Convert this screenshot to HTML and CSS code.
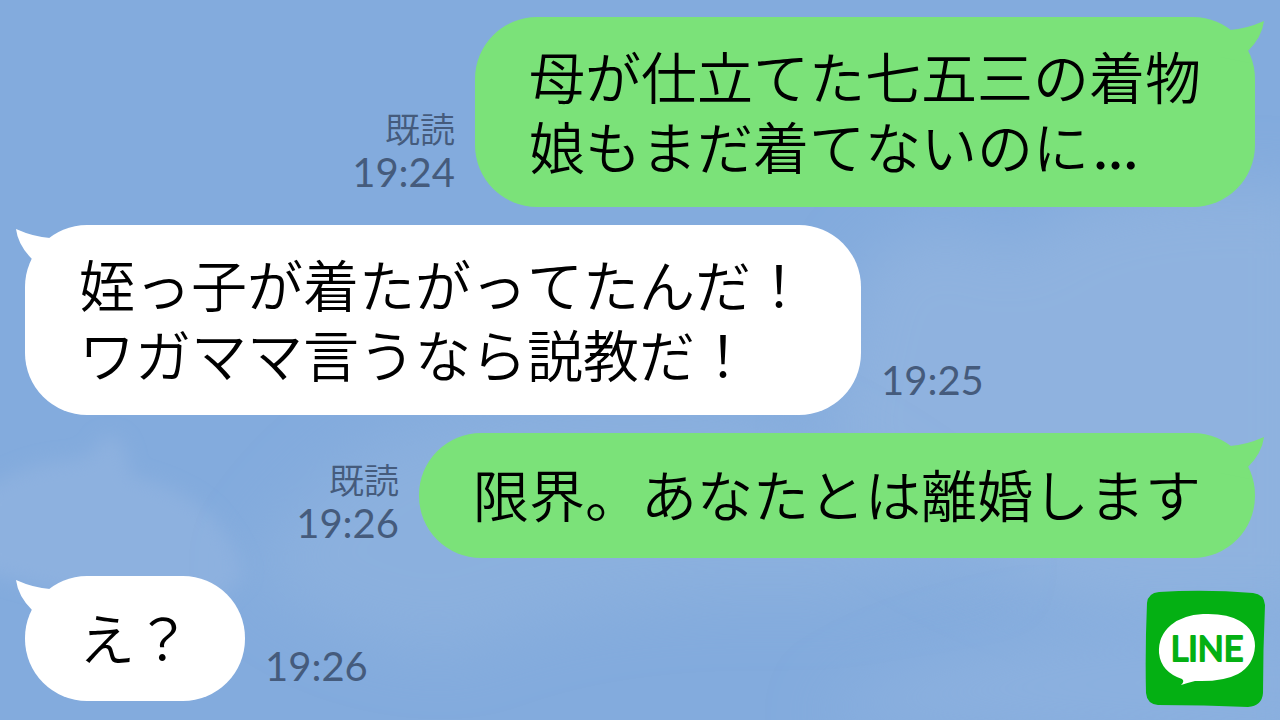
FILE: index.html
```html
<!DOCTYPE html>
<html lang="ja">
<head>
<meta charset="utf-8">
<meta name="viewport" content="width=device-width, initial-scale=1">
<title>LINE</title>
<link rel="stylesheet" href="styles.css">
</head>
<body>
<svg class="sky" viewBox="0 0 1280 720" preserveAspectRatio="xMidYMid slice" aria-hidden="true">
  <defs>
    <filter id="soft" x="-20%" y="-20%" width="140%" height="140%"><feGaussianBlur stdDeviation="9"/></filter>
    <filter id="wide" x="-30%" y="-30%" width="160%" height="160%"><feGaussianBlur stdDeviation="30"/></filter>
  </defs>
  <rect width="1280" height="720" fill="#83abdd"/>
  <path filter="url(#wide)" fill="#8fb2df" d="M860 270 Q930 190 1010 250 Q1100 170 1320 190 V620 H1120 Q900 560 820 450Z"/>
  <path filter="url(#soft)" fill="#8db1df" d="M-20 492 Q30 460 75 460 Q95 455 100 440 Q125 425 130 475 Q190 490 215 520 Q240 550 245 575 L200 620 Q80 600 -20 570Z"/>
  <path filter="url(#wide)" fill="#8bb0de" d="M250 570 Q320 460 400 430 Q560 390 760 410 Q900 470 1000 570 L820 600 Q600 590 460 650 Q340 650 250 570Z"/>
  <path filter="url(#wide)" fill="#8bb0df" d="M820 720 Q930 620 1320 610 V760Z"/>
</svg>

<main class="chat">
  <article class="message sent">
    <p class="bubble">母が仕立てた七五三の着物<br>娘もまだ着てないのに<span class="dots">...</span>
      <svg class="tail" viewBox="0 0 60 50" aria-hidden="true"><path d="M10 22 L20 13 Q36 12 54 4 Q52 20 38 34 L40 46 L10 40Z"/></svg>
    </p>
    <div class="meta"><span class="read">既読</span><time>19:24</time></div>
  </article>

  <article class="message received">
    <p class="bubble">姪っ子が着たがってたんだ！<br>ワガママ言うなら説教だ！
      <svg class="tail" viewBox="0 0 60 50" aria-hidden="true"><path d="M10 22 L20 13 Q36 12 54 4 Q52 20 38 34 L40 46 L10 40Z"/></svg>
    </p>
    <div class="meta"><time>19:25</time></div>
  </article>

  <article class="message sent">
    <p class="bubble single">限界。あなたとは離婚します
      <svg class="tail" viewBox="0 0 60 50" aria-hidden="true"><path d="M10 22 L20 13 Q36 12 54 4 Q52 20 38 34 L40 46 L10 40Z"/></svg>
    </p>
    <div class="meta"><span class="read">既読</span><time>19:26</time></div>
  </article>

  <article class="message received">
    <p class="bubble single">え？
      <svg class="tail" viewBox="0 0 60 50" aria-hidden="true"><path d="M10 22 L20 13 Q36 12 54 4 Q52 20 38 34 L40 46 L10 40Z"/></svg>
    </p>
    <div class="meta"><time>19:26</time></div>
  </article>
</main>

<svg class="logo" viewBox="0 0 120 118" role="img" aria-label="LINE">
  <path fill="#04b013" d="M14 2 Q60 -1 108 3 Q119 4 120 15 Q118 60 118 103 Q117 116 103 117 Q60 115 13 115 Q2 114 1 103 Q0 60 2 13 Q3 3 14 2Z"/>
  <path fill="#fff" d="M37 89 Q16 82 14 63 Q13 46 26 35 Q38 25 58 24 Q82 23 95 31 Q110 40 110 56 Q109 75 93 84 Q78 92 50 91 Q42 93 36 95 Q40 91 37 89Z"/>
  <text class="logo-text" x="62" y="71" text-anchor="middle">LINE</text>
</svg>
</body>
</html>
```
FILE: styles.css
```css
* {
  box-sizing: border-box;
}

body {
  margin: 0;
  min-height: 100vh;
  position: relative;
  overflow-x: hidden;
  background: #83abdd;
  font-family: "Liberation Sans", "Noto Sans CJK JP", sans-serif;
  font-kerning: none;
  color: #000;
}

.sky {
  position: absolute;
  inset: 0;
  width: 100%;
  height: 100%;
}

.chat {
  position: relative;
  display: flex;
  flex-direction: column;
  gap: 18px;
  padding: 17px 25px 19px;
}

.message {
  display: flex;
  align-items: flex-end;
  gap: 20px;
}

.sent {
  flex-direction: row-reverse;
}

.bubble {
  position: relative;
  margin: 0;
  padding: 28px 54px 22px;
  border-radius: 62px;
  font-size: 56px;
  font-weight: 350;
  line-height: 70px;
}

.single {
  padding-top: 30px;
  padding-bottom: 25px;
}

.sent .bubble {
  background: #7be279;
  fill: #7be279;
}

.received .bubble {
  background: #fff;
  fill: #fff;
}

.dots {
  margin-left: 4px;
  font-family: Lato, sans-serif;
  font-size: 64px;
  font-weight: 400;
  line-height: 40px;
}

.tail {
  position: absolute;
  top: 0;
  right: -15px;
  width: 60px;
  height: 50px;
}

.received .tail {
  right: auto;
  left: -15px;
  transform: scaleX(-1);
}

.meta {
  display: flex;
  flex-direction: column;
  align-items: flex-end;
  padding-bottom: 14px;
  color: #455b7c;
  font-size: 40px;
  line-height: 42px;
}

.read {
  font-size: 35px;
  font-weight: 350;
  line-height: 40px;
}

time {
  font-family: Lato, sans-serif;
}

.logo {
  position: absolute;
  right: 15px;
  bottom: 12px;
  width: 120px;
  height: 118px;
}

.logo-text {
  font-family: Lato, sans-serif;
  font-size: 34px;
  font-weight: 400;
  fill: #04b013;
  stroke: #04b013;
  stroke-width: 2px;
  stroke-linejoin: round;
}
```
